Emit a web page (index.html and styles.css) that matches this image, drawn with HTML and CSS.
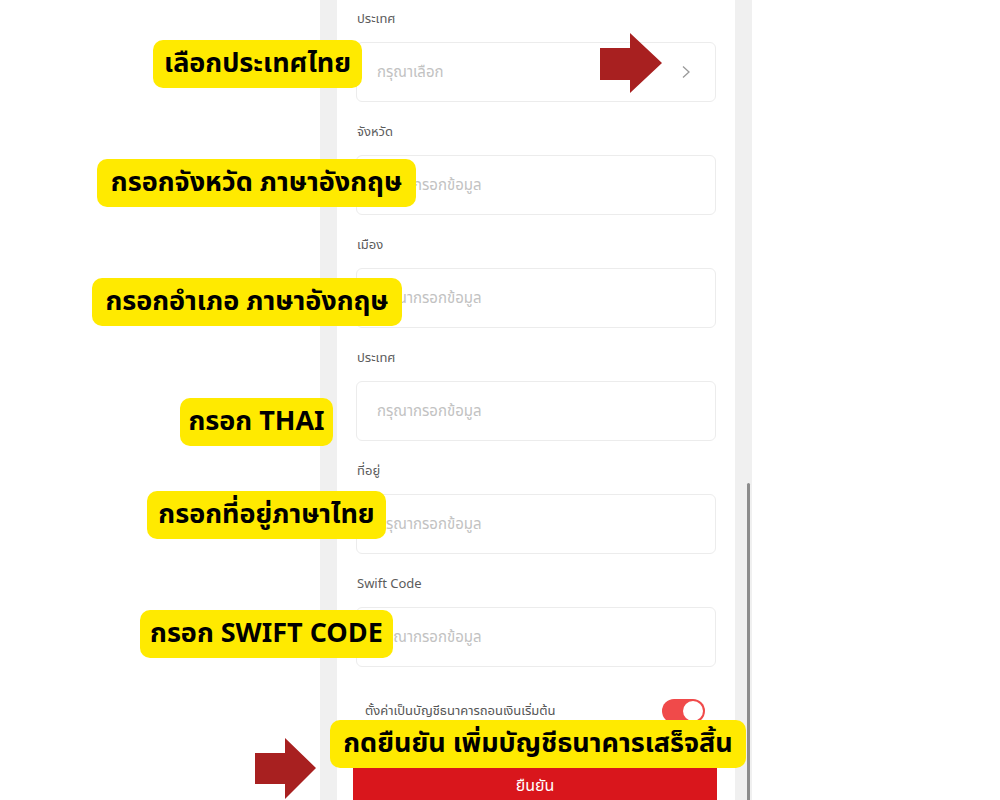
FILE: index.html
```html
<!DOCTYPE html>
<html lang="th">
<head>
<meta charset="utf-8">
<title>เพิ่มบัญชีธนาคาร</title>
<link rel="stylesheet" href="styles.css">
</head>
<body>
<div class="stage">
  <div class="phone">
    <div class="gutter"></div>
    <div class="form">
      <div class="field">
        <div class="label">ประเทศ</div>
        <div class="box select"><span class="ph">กรุณาเลือก</span>
          <svg class="chev" width="10" height="14" viewBox="0 0 10 14"><path d="M2 1.5 L8 7 L2 12.5" fill="none" stroke="#9a9a9a" stroke-width="1.3"/></svg>
        </div>
      </div>
      <div class="field">
        <div class="label">จังหวัด</div>
        <div class="box"><span class="ph">กรุณากรอกข้อมูล</span></div>
      </div>
      <div class="field">
        <div class="label">เมือง</div>
        <div class="box"><span class="ph">กรุณากรอกข้อมูล</span></div>
      </div>
      <div class="field">
        <div class="label">ประเทศ</div>
        <div class="box"><span class="ph">กรุณากรอกข้อมูล</span></div>
      </div>
      <div class="field">
        <div class="label">ที่อยู่</div>
        <div class="box"><span class="ph">กรุณากรอกข้อมูล</span></div>
      </div>
      <div class="field last">
        <div class="label">Swift Code</div>
        <div class="box"><span class="ph">กรุณากรอกข้อมูล</span></div>
      </div>
      <div class="toggle-row">
        <span class="toggle-text">ตั้งค่าเป็นบัญชีธนาคารถอนเงินเริ่มต้น</span>
        <span class="switch"><span class="knob"></span></span>
      </div>
      <div class="submit">ยืนยัน</div>
    </div>
    <div class="gutter right"><div class="scrollbar"></div></div>
  </div>

  <div class="callout c1">เลือกประเทศไทย</div>
  <div class="callout c2">กรอกจังหวัด ภาษาอังกฤษ</div>
  <div class="callout c3">กรอกอำเภอ ภาษาอังกฤษ</div>
  <div class="callout c4">กรอก THAI</div>
  <div class="callout c5">กรอกที่อยู่ภาษาไทย</div>
  <div class="callout c6">กรอก SWIFT CODE</div>
  <div class="callout c7">กดยืนยัน เพิ่มบัญชีธนาคารเสร็จสิ้น</div>

  <svg class="arrow a1" width="64" height="62" viewBox="0 0 64 62"><polygon points="0,15 30,15 30,0 62,30 30,60 30,47 0,47" fill="#a82020"/></svg>
  <svg class="arrow a2" width="64" height="62" viewBox="0 0 64 62"><polygon points="0,15 30,15 30,0 61,30 30,61 30,46 0,46" fill="#a82020"/></svg>
</div>
</body>
</html>
```
FILE: styles.css
```css
* { box-sizing: border-box; }
html, body { margin: 0; padding: 0; background: #fff; }
body {
  width: 1000px;
  height: 800px;
  overflow: hidden;
  font-family: "Noto Sans Thai", "Noto Sans", "Liberation Sans", sans-serif;
}
.stage { position: relative; width: 1000px; height: 800px; }
.phone {
  margin-left: 320px;
  width: 432px;
  height: 800px;
  display: grid;
  grid-template-columns: 17px 398px 17px;
  background: #f0f0f0;
}
.gutter { background: #f0f0f0; }
.gutter.right { padding: 483px 0 0 12px; }
.scrollbar { width: 3px; height: 317px; background: #8c8c8c; border-radius: 2px 2px 0 0; }
.form { background: #fff; padding: 0 19px 0 19px; }
.field { height: 113px; }
.field.last { height: 102px; }
.label {
  padding: 10px 0 0 1px;
  height: 42px;
  font-size: 13px;
  line-height: 18px;
  color: #5c5c5c;
}
.box {
  height: 60px;
  border: 1px solid #ececec;
  border-radius: 6px;
  display: flex;
  align-items: center;
  justify-content: space-between;
  padding: 0 24px 0 20px;
}
.ph { font-size: 15px; color: #c2c2c2; }
.chev { display: block; }
.toggle-row {
  margin-top: 31px;
  height: 26px;
  display: flex;
  align-items: center;
  justify-content: space-between;
  padding: 0 11px 0 9px;
}
.toggle-text { font-size: 13px; color: #555; }
.switch {
  width: 43px;
  height: 24px;
  border-radius: 12px;
  background: #f04a4a;
  display: flex;
  justify-content: flex-end;
  align-items: center;
  padding-right: 2px;
}
.knob { width: 20px; height: 20px; border-radius: 50%; background: #fff; }
.submit {
  margin: 42px -1px 0 -3px;
  height: 50px;
  background: #d9161c;
  color: #fff;
  font-size: 16px;
  text-align: center;
  padding-top: 8px;
  line-height: 24px;
}
.callout {
  position: absolute;
  height: 48px;
  padding: 0;
  background: #ffea00;
  border-radius: 10px;
  font-size: 27px;
  font-weight: 700;
  line-height: 48px;
  color: #000;
  white-space: nowrap;
  text-align: center;
}
.c1 { left: 153px; top: 40px; width: 209px; }
.c2 { left: 97px; top: 159px; width: 319px; }
.c3 { left: 92px; top: 278px; width: 310px; }
.c4 { left: 180px; top: 398px; width: 153px; }
.c5 { left: 147px; top: 491px; width: 239px; }
.c6 { left: 140px; top: 610px; width: 253px; }
.c7 { left: 330px; top: 720px; width: 416px; }
.arrow { position: absolute; display: block; }
.a1 { left: 600px; top: 33px; }
.a2 { left: 255px; top: 738px; }
```
